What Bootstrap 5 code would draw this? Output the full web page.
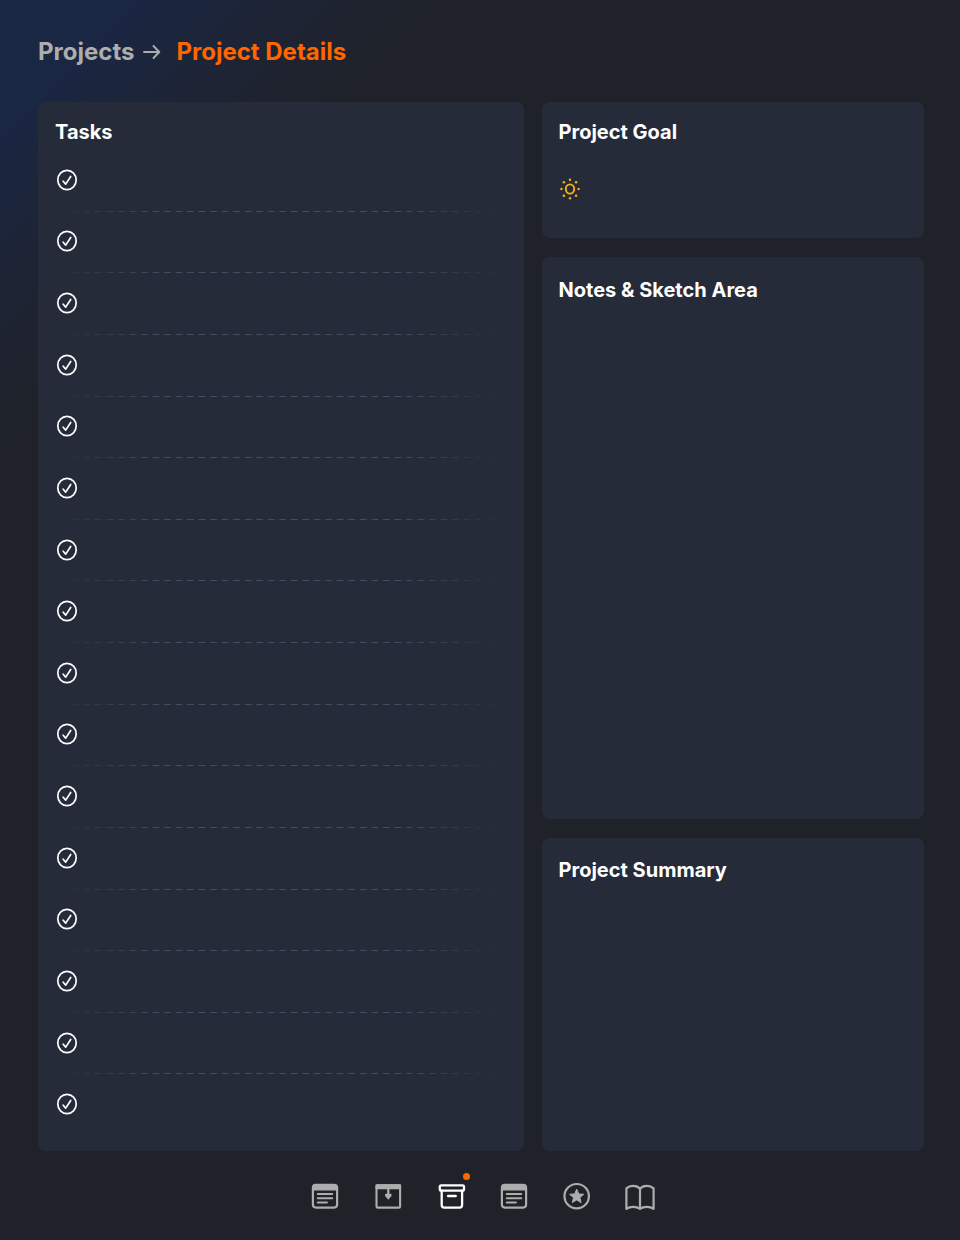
<!DOCTYPE html>
<html lang="en" data-bs-theme="dark">
<head>
<meta charset="utf-8">
<meta name="viewport" content="width=device-width, initial-scale=1">
<title>Project Details</title>
<link href="https://cdn.jsdelivr.net/npm/bootstrap@5.3.0/dist/css/bootstrap.min.css" rel="stylesheet">
<style>
  :root { --page: #1f2229; --panel: #262b39; --muted: #adadad; --accent: #ff6600; --rule: #454c61; }
  body {
    font-family: Inter, "Liberation Sans", sans-serif;
    color: #fff;
    background: linear-gradient(135deg, #192845 0, #1a2743 90px, #1e2330 240px, var(--page) 320px) no-repeat var(--page);
  }
  .page { padding: 0 36px 0 38px; }
  .crumbs { height: 102px; padding-top: 2px; font-size: 24px; line-height: 32px; font-weight: 700; color: var(--muted); }
  .crumbs a { color: inherit; }
  .crumbs [aria-current] { color: var(--accent); }
  .boards { display: grid; grid-template-columns: minmax(0, 485fr) minmax(0, 382fr); gap: 18px; }
  .side-col { display: grid; grid-template-rows: minmax(100px, 136fr) 562fr 313fr; gap: 19px; }
  .panel { background: var(--panel); border-radius: 8px; padding: 16px 17px; }
  .panel h2 { font-size: 20px; line-height: 28px; font-weight: 700; margin: 0; }
  .panel-notes { padding-top: 19px; }
  .panel-summary { padding-top: 18px; }
  .panel-tasks { padding: 16px 14px 16px 11px; }
  .panel-tasks h2 { padding-left: 6px; margin-bottom: 3px; }
  .task-list li { flex: 1 0 40px; padding-left: 6px; }
  .task-list li:not(:last-child)::after {
    content: ""; position: absolute; inset: auto 0 -1px 0; height: 1px;
    background: linear-gradient(90deg, var(--rule) 55%, transparent 0) 0 0 / 2.5% 100%;
    -webkit-mask-image: linear-gradient(90deg, transparent, #000 25%, #000 75%, transparent);
    mask-image: linear-gradient(90deg, transparent, #000 25%, #000 75%, transparent);
  }
  .task-check {
    appearance: none; width: 24px; height: 24px; margin: 0; border: 0; cursor: pointer;
    background: url("data:image/svg+xml,%3Csvg xmlns='http://www.w3.org/2000/svg' viewBox='0 0 24 24' fill='none' stroke='white' stroke-linecap='round' stroke-linejoin='round'%3E%3Cellipse cx='12' cy='12' rx='9.2' ry='9.6' stroke-width='1.7'/%3E%3Cpath d='M8.2 13.2l2.5 2.9 5-7.6' stroke-width='1.7'/%3E%3C/svg%3E") center / contain no-repeat;
  }
  .tabs { height: 89px; gap: 31px; padding-left: 2px; color: var(--muted); }
  .tabs a { width: 32px; height: 32px; color: inherit; }
  .tabs a[aria-current] { color: #fff; }
  .tabs svg { display: block; }
  .dot { top: -7px; right: -3px; width: 7px; height: 7px; background: var(--accent); }
</style>
</head>
<body>
<div class="page d-flex flex-column min-vh-100">
  <nav class="crumbs d-flex align-items-center" aria-label="Breadcrumb">
    <a href="#projects" class="text-decoration-none">Projects</a>
    <svg class="mx-2 flex-shrink-0" width="26" height="24" viewBox="0 0 26 24" fill="none" stroke="currentColor" stroke-width="1.9" stroke-linecap="round" stroke-linejoin="round" aria-hidden="true"><path d="M2 12h15M11.500 6l5.800 6-5.800 6"/></svg>
    <span aria-current="page">Project Details</span>
  </nav>

  <main class="boards flex-grow-1">
    <section class="panel panel-tasks d-flex flex-column" aria-labelledby="h-tasks">
      <h2 id="h-tasks">Tasks</h2>
      <ul class="task-list list-unstyled d-flex flex-column flex-grow-1 mb-0" id="tasks"></ul>
    </section>
    <div class="side-col">
      <section class="panel">
        <h2>Project Goal</h2>
        <svg class="d-block mt-4" width="22" height="38" viewBox="0 0 22 38" fill="#f5b00f" aria-hidden="true">
          <ellipse cx="11" cy="19" rx="4.200" ry="4.600" fill="none" stroke="#f5b00f" stroke-width="1.900"/>
          <circle cx="11" cy="9.800" r="1.200"/><circle cx="11" cy="28.200" r="1.200"/>
          <circle cx="2.400" cy="19" r="1.200"/><circle cx="19.600" cy="19" r="1.200"/>
          <circle cx="4.900" cy="12.300" r="1.300"/><circle cx="17.100" cy="12.300" r="1.300"/>
          <circle cx="4.900" cy="25.700" r="1.300"/><circle cx="17.100" cy="25.700" r="1.300"/>
        </svg>
      </section>
      <section class="panel panel-notes"><h2>Notes &amp; Sketch Area</h2></section>
      <section class="panel panel-summary"><h2>Project Summary</h2></section>
    </div>
  </main>

  <nav class="tabs d-flex justify-content-center align-items-center" aria-label="Sections">
    <a href="#notes" aria-label="Notes">
      <svg width="32" height="32" viewBox="0 0 32 32" fill="none" stroke="currentColor" stroke-width="2.200" stroke-linecap="round"><rect x="3.900" y="4.800" width="24.200" height="22.800" rx="3"/><path d="M4 9.800V7.800a3 3 0 0 1 3-3h18a3 3 0 0 1 3 3v2z" fill="currentColor" stroke-width="1.500"/><path d="M8.700 14h14.600M8.700 18.300h14.600M8.700 22.500h9.300" stroke-width="1.900"/></svg>
    </a>
    <a href="#inbox" aria-label="Inbox">
      <svg width="32" height="32" viewBox="0 0 32 32" fill="none" stroke="currentColor" stroke-width="2.100" stroke-linejoin="round"><rect x="4.500" y="5.300" width="23.600" height="22.300" rx="1.200"/><path d="M4.500 5.300h23.600v3H4.500z" fill="currentColor"/><path d="M16.300 8v8" stroke-width="2.300"/><path d="M13.700 14.300h5.200v1.500l-2.600 3-2.600-3z" fill="currentColor" stroke-width="1.200"/></svg>
    </a>
    <a href="#projects" class="position-relative" aria-label="Projects" aria-current="page">
      <svg width="32" height="32" viewBox="0 0 32 32" fill="none" stroke="currentColor" stroke-width="2.300" stroke-linejoin="round" stroke-linecap="round"><rect x="4.800" y="5.400" width="24.200" height="5.200" rx="1.400"/><path d="M6.700 10.600v14.500a2.500 2.500 0 0 0 2.500 2.500h15.400a2.500 2.500 0 0 0 2.500-2.500V10.600M13 16h7.800"/></svg>
      <span class="dot position-absolute rounded-circle"></span>
    </a>
    <a href="#lists" aria-label="Lists">
      <svg width="32" height="32" viewBox="0 0 32 32" fill="none" stroke="currentColor" stroke-width="2.200" stroke-linecap="round"><rect x="3.900" y="4.800" width="24.200" height="22.800" rx="3"/><path d="M4 9.800V7.800a3 3 0 0 1 3-3h18a3 3 0 0 1 3 3v2z" fill="currentColor" stroke-width="1.500"/><path d="M8.700 14h14.600M8.700 18.300h14.600M8.700 22.500h9.300" stroke-width="1.900"/></svg>
    </a>
    <a href="#favourites" aria-label="Favourites">
      <svg width="32" height="32" viewBox="0 0 32 32" fill="none" stroke="currentColor" stroke-width="2.200" stroke-linejoin="round"><circle cx="15.700" cy="16.200" r="12.200"/><path d="M15.700 9.200l2 4.700 5.100.4-3.900 3.300 1.200 5-4.400-2.700-4.400 2.700 1.200-5-3.900-3.300 5.100-.4z" fill="currentColor" stroke-width="1"/></svg>
    </a>
    <a href="#journal" aria-label="Journal">
      <svg width="32" height="32" viewBox="0 0 32 32" fill="none" stroke="currentColor" stroke-width="2.200" stroke-linecap="round" stroke-linejoin="round"><path d="M16 8.800C14.500 6.800 12.300 5.800 9.300 5.800S4 6.800 2.400 8.400v20.500c1.800-1.400 4.100-2.100 6.800-2.100s5 .7 6.800 2.100c1.800-1.400 4.100-2.100 6.800-2.100s5 .7 6.800 2.100V8.400c-1.600-1.600-4.300-2.600-7.100-2.600S17.500 6.800 16 8.800zM16 8.800v19.500"/></svg>
    </a>
  </nav>
</div>
<script src="https://cdn.jsdelivr.net/npm/bootstrap@5.3.0/dist/js/bootstrap.bundle.min.js"></script>
<script>
  const list = document.getElementById('tasks');
  for (let n = 1; n <= 16; n++) {
    list.insertAdjacentHTML('beforeend',
      `<li class="position-relative d-flex align-items-center"><input class="task-check" type="checkbox" aria-label="Task ${n}"></li>`);
  }
</script>
</body>
</html>
